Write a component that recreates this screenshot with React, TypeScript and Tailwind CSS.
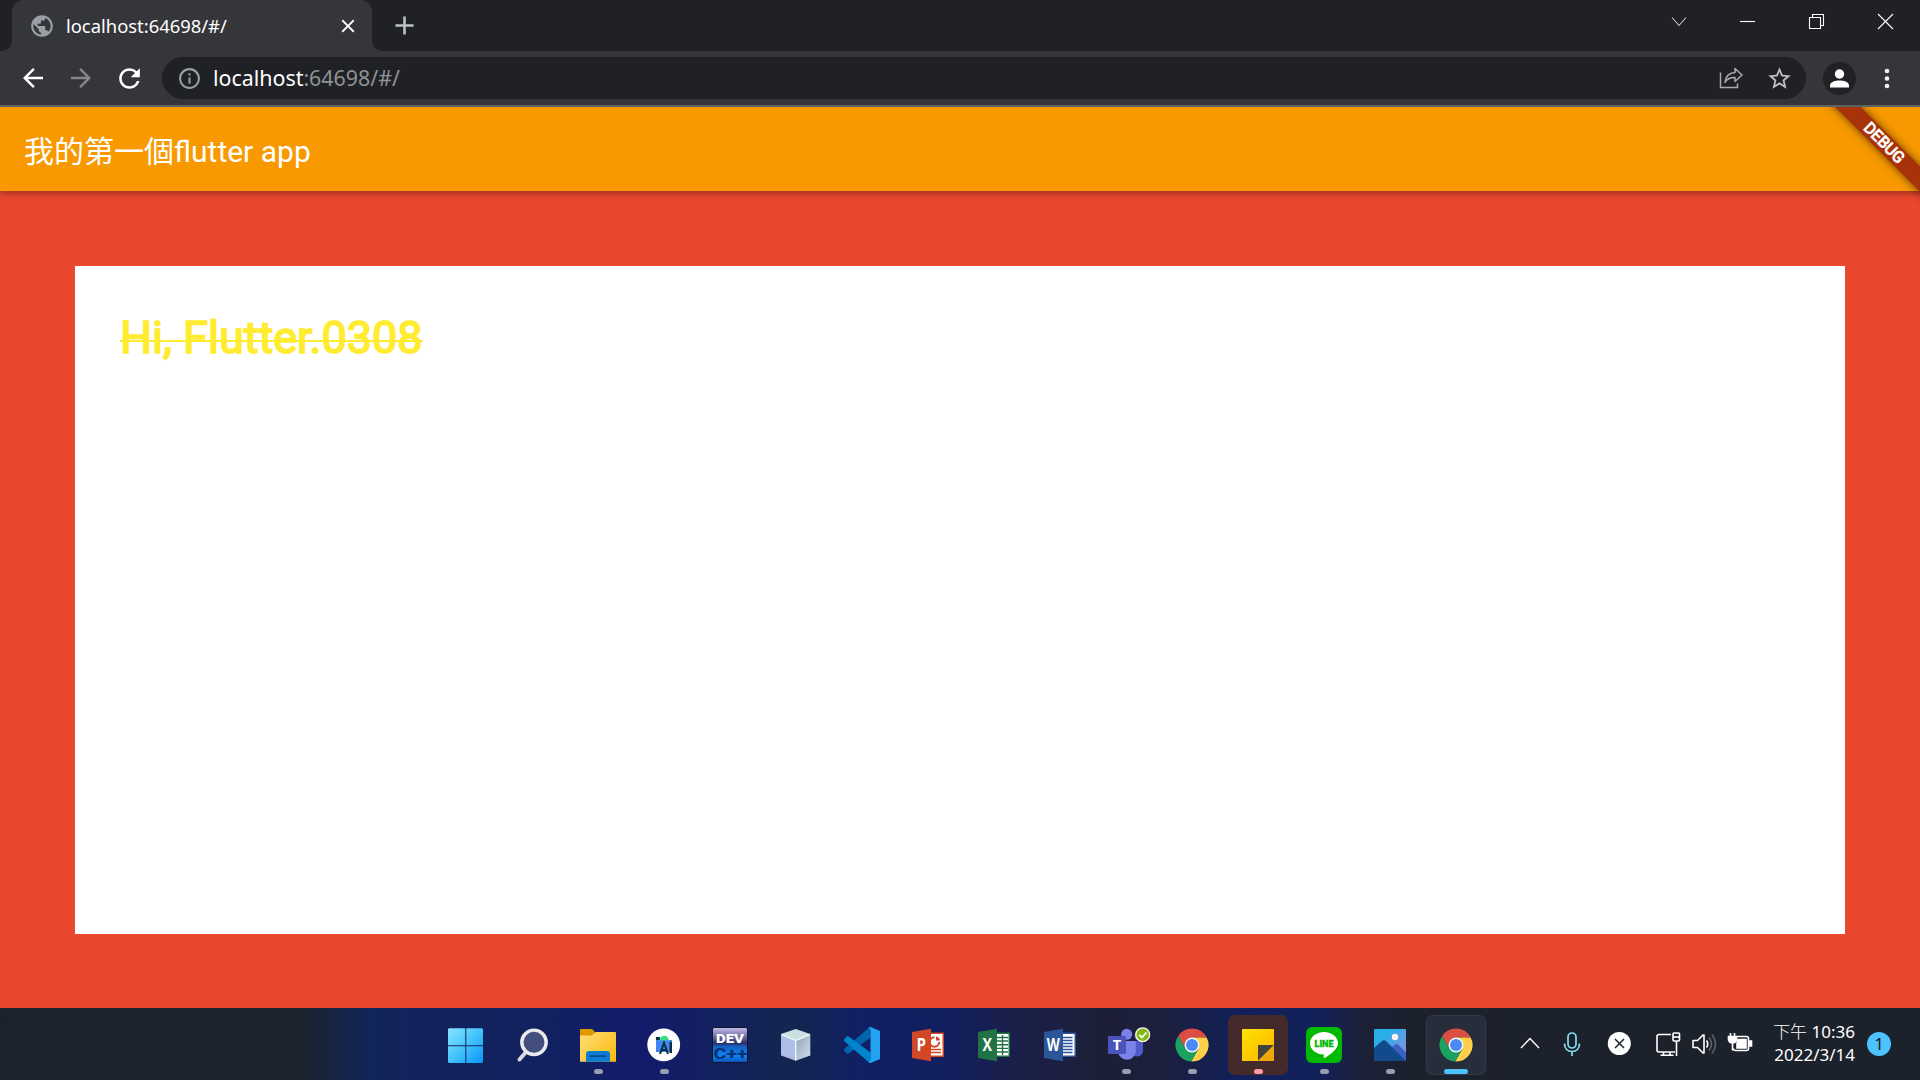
import type { ReactNode } from "react";
import { MdAdd, MdArrowBack, MdArrowForward, MdClose, MdInfoOutline, MdPublic, MdRefresh, MdStarBorder } from "react-icons/md";

const uiFont = "font-['Noto_Sans','Noto_Sans_CJK_TC',sans-serif]";

function TabStrip() {
  return (
    <div className="flex h-[51px] items-end bg-[#202124]">
      <div className="flex h-full w-3 items-end bg-[#35363a]">
        <div className="h-full w-3 rounded-br-[10px] bg-[#202124]" />
      </div>
      <div className="h-full w-[360px] bg-[#202124]">
        <div className="flex h-full items-center rounded-t-[12px] bg-[#35363a] pl-[17px] pr-[13px]">
          <MdPublic size={26} className="shrink-0 text-[#9aa0a6]" />
          <span className="ml-[11px] whitespace-nowrap text-[18.4px] leading-6 text-white">localhost:64698/#/</span>
          <MdClose size={22} className="ml-auto shrink-0 text-white" />
        </div>
      </div>
      <div className="h-full w-3 bg-[#35363a]">
        <div className="h-full w-3 rounded-bl-[10px] bg-[#202124]" />
      </div>
      <div className="flex h-full items-center pl-[5px]">
        <MdAdd size={31} className="text-[#bdc1c6]" />
      </div>
      <svg className="ml-auto h-[51px] w-[270px]" viewBox="1650 0 270 51" fill="none" stroke="#fff" strokeWidth="1.1">
        <path d="M1672 17.5l7 8 7-8" stroke="#c8c8c8" />
        <path d="M1740 21.5h15" />
        <path d="M1809.5 17.5h11v11h-11zM1812.500 17.500v-3h11v11h-3" />
        <path d="M1878 14l15 15M1893 14l-15 15" />
      </svg>
    </div>
  );
}

function Toolbar() {
  return (
    <div className="flex h-[56px] items-start border-b-2 border-[#606165] bg-[#35363a] pt-[6px]">
      <div className="flex h-[42px] w-[162px] items-center gap-[18px] pl-[18px]">
        <MdArrowBack size={30} className="shrink-0 text-white" />
        <MdArrowForward size={30} className="shrink-0 text-[#84868a]" />
        <MdRefresh size={31} className="shrink-0 text-white" />
      </div>
      <div className="flex h-[42px] w-[1644px] items-center rounded-full bg-[#202124] pl-[15px] pr-[13px]">
        <MdInfoOutline size={25} className="text-[#9aa0a6]" />
        <span className="ml-[11px] whitespace-nowrap text-[21.4px] leading-7 text-[#8f9296]">
          <span className="text-white">localhost</span>:64698/#/
        </span>
        <svg className="ml-auto mr-[23px] h-6 w-6" viewBox="0 0 24 24" fill="none" stroke="#a9abae" strokeWidth="1.5">
          <path d="M1.500 6.500v15h17v-4" />
          <path d="M16 2.500l7 6.500-7 6.500v-4c-5-.2-8 1.300-10 5 .5-6 4-9.500 10-10z" strokeLinejoin="round" />
        </svg>
        <MdStarBorder size={27} className="text-[#bfc1c4]" />
      </div>
      <svg className="ml-[17px] h-[42px] w-[33px]" viewBox="0 0 33 42">
        <circle cx="16.500" cy="21.500" r="16.500" fill="#202124" />
        <circle cx="16.500" cy="17" r="4.700" fill="#fff" />
        <path d="M7 30.500v-2c0-4 6-5 9.500-5s9.500 1 9.500 5v2z" fill="#fff" />
      </svg>
      <svg className="ml-[27px] h-[42px] w-2" viewBox="0 0 8 42" fill="#f1f3f4">
        <circle cx="4" cy="14" r="2.300" />
        <circle cx="4" cy="21.500" r="2.300" />
        <circle cx="4" cy="29" r="2.300" />
      </svg>
    </div>
  );
}

function FlutterPage() {
  return (
    <main className="relative flex h-[901px] flex-col overflow-hidden bg-[#e9472e] font-[Roboto,'Noto_Sans_CJK_TC',sans-serif]">
      <header className="z-10 flex h-[84px] shrink-0 items-center bg-[#f99900] pl-6 pt-[6px] text-[30px] text-white shadow-[0_3px_6px_rgba(0,0,0,0.28)]">
        <h1 className="whitespace-nowrap leading-9">我的第一個flutter app</h1>
      </header>
      <section className="mx-[75px] mt-[75px] h-[668px] bg-white pl-[45px] pt-[45px]">
        <p className="relative w-fit text-[45px] leading-[53px] text-[#ffeb2f] [-webkit-text-stroke:1.7px_#ffeb2f]">
          Hi, Flutter.0308
          <span className="absolute inset-x-0 top-[29px] h-[2px] bg-[#ffeb2f]" />
        </p>
      </section>
      <div className="absolute right-[-84px] top-[27px] z-20 flex h-[18px] w-[240px] rotate-45 items-center justify-center bg-[#a93308] text-[15.8px] text-white shadow-[0_0_10px_rgba(0,0,0,0.6)] [-webkit-text-stroke:0.9px_#fff]">
        DEBUG
      </div>
    </main>
  );
}

function ChromeLogo() {
  return (
    <>
      <path d="M16.150 21.020A16.500 16.500 0 0 1 44.700 22.500H30L23.500 33.750z" fill="#db4e43" />
      <path d="M44.700 22.500A16.500 16.500 0 0 1 29.150 46.480L36.500 33.750 30 22.500z" fill="#fecf48" />
      <path d="M29.150 46.480A16.500 16.500 0 0 1 16.150 21.020L23.500 33.750H36.500z" fill="#1ba261" />
      <circle cx="30" cy="30" r="7.500" fill="#f3f6fb" />
      <circle cx="30" cy="30" r="6" fill="#4a8af4" />
    </>
  );
}

function OfficeLogo({ letter, color, children }: { letter: string; color: string; children: ReactNode }) {
  return (
    <>
      <rect x="30" y="17.500" width="16" height="24.500" rx="1" fill={color} />
      <path d="M32 19h12.500v21.500H32z" fill="#fff" />
      {children}
      <path d="M14 17l19-3.300v32.600L14 43z" fill={color} />
      <text x="23.300" y="36" fontSize="17" fontWeight="700" textAnchor="middle" fill="#fff" fontFamily="Open Sans, sans-serif" textLength={letter === "W" ? 13 : 9.5} lengthAdjust="spacingAndGlyphs">
        {letter}
      </text>
    </>
  );
}

type App = { name: string; icon: ReactNode; dot?: "idle" | "alert" | "active" };

const apps: App[] = [
  {
    name: "Start",
    icon: (
      <>
        <defs>
          <linearGradient id="win" x1="12" y1="13" x2="47" y2="48" gradientUnits="userSpaceOnUse">
            <stop stopColor="#8be3ff" />
            <stop offset=".5" stopColor="#43c5fa" />
            <stop offset="1" stopColor="#0b93f8" />
          </linearGradient>
        </defs>
        <path d="M13 13.300h16.300v17H12v-16zM30.300 13.300H46l1 1v16H30.300zM12 31.300h17.300V48H13l-1-1zM30.300 31.300H47V47l-1 1H30.300z" fill="url(#win)" />
      </>
    ),
  },
  {
    name: "Search",
    icon: (
      <>
        <path d="M24 37l-6.500 7.500" stroke="#d5d7dc" strokeWidth="4" strokeLinecap="round" />
        <circle cx="32" cy="27.300" r="12.200" fill="#434e7d" stroke="#e9eaec" strokeWidth="3.400" />
      </>
    ),
  },
  {
    name: "File Explorer",
    dot: "idle",
    icon: (
      <>
        <defs>
          <linearGradient id="folder" x1="12" y1="17" x2="48" y2="47" gradientUnits="userSpaceOnUse">
            <stop stopColor="#ffdf78" />
            <stop offset="1" stopColor="#fbb90d" />
          </linearGradient>
        </defs>
        <path d="M12 15q0-1 1-1h11l4 4v6H12z" fill="#e09a00" />
        <path d="M12 20.500h12l4-3.500h19q1 0 1 1v28.700H12z" fill="url(#folder)" />
        <path d="M18 46.700V39q0-3 3-3h18q3 0 3 3v7.700z" fill="#0c7cd0" />
        <path d="M22.500 41.200h15" stroke="#084a94" strokeWidth="1.700" strokeLinecap="round" />
      </>
    ),
  },
  {
    name: "Android Studio",
    dot: "idle",
    icon: (
      <>
        <circle cx="29.700" cy="29.800" r="16.400" fill="#fff" />
        <path d="M22 25h16v12H22z" fill="#4285f4" />
        <path d="M22 22h4v3h-4zM35.500 27h2.500v11h-2.500z" fill="#0b3042" />
        <path d="M25.500 25.500a4.700 4.700 0 0 1 9.400 0z" fill="#3ddc84" />
        <path d="M26 39l4-11 4 11M26.500 35h7" stroke="#073042" strokeWidth="2" fill="none" />
      </>
    ),
  },
  {
    name: "Dev-C++",
    icon: (
      <>
        <defs>
          <linearGradient id="dev" x2="0" y2="1">
            <stop stopColor="#c3bdea" />
            <stop offset=".2" stopColor="#8580b8" />
            <stop offset=".45" stopColor="#2b2f6a" />
            <stop offset=".55" stopColor="#1263c4" />
            <stop offset=".8" stopColor="#1284f5" />
            <stop offset="1" stopColor="#0a52b8" />
          </linearGradient>
        </defs>
        <rect x="12.500" y="12.500" width="35" height="35" rx="2" fill="url(#dev)" stroke="#10152a" />
        <text x="30" y="28" fontSize="13.500" fontWeight="900" textAnchor="middle" fill="#fff" fontFamily="Roboto, sans-serif" textLength="28" lengthAdjust="spacingAndGlyphs">
          DEV
        </text>
        <text x="30.500" y="44.300" fontSize="14" fontWeight="900" textAnchor="middle" fill="#073477" fontFamily="Roboto, sans-serif" textLength="34" lengthAdjust="spacingAndGlyphs">
          C++
        </text>
      </>
    ),
  },
  {
    name: "NetBeans",
    icon: (
      <>
        <defs>
          <linearGradient id="cube" x1="0" y1="0" x2="1" y2="1">
            <stop stopColor="#8fa4bd" />
            <stop offset="1" stopColor="#d5deeb" />
          </linearGradient>
        </defs>
        <path d="M29.700 14l14.500 5-14.500 6.500L15 19z" fill="#c9e0de" />
        <path d="M15 19l14.700 6.500v20.200L15 40.500z" fill="#aebde6" />
        <path d="M44.300 19l-14.600 6.500v20.200l14.600-5.200z" fill="url(#cube)" />
        <path d="M15.500 19.300l14.200 6.200 14-6.200M29.700 25.500v20" stroke="#f4fbff" strokeWidth="1.300" fill="none" />
      </>
    ),
  },
  {
    name: "Visual Studio Code",
    icon: (
      <>
        <path d="M38.500 12v10.500L17 38.300q-1.500 1-2.800-.2L12.500 36q-1-1.300.2-2.500L36.500 13z" fill="#0065a9" />
        <path d="M38.500 48V37.500L17 21.700q-1.500-1-2.800.2L12.500 24q-1 1.300.2 2.500L36.500 47z" fill="#0084cc" />
        <path d="M38.500 12L48 16v28l-9.500 4q-2 .2-2.500-1.500 2 .7 2.500-1.500V15q-.5-2.200-2.500-1.500.5-1.700 2.500-1.500z" fill="#22a2f0" />
      </>
    ),
  },
  {
    name: "PowerPoint",
    icon: (
      <OfficeLogo letter="P" color="#d24726">
        <circle cx="36.500" cy="27" r="4.700" fill="none" stroke="#d24726" strokeWidth="2" />
        <path d="M36.500 20.500v6.500h6.500v-6.500z" fill="#fff" />
        <path d="M38 21.500v4h4q-.3-3.300-4-4z" fill="#d24726" />
        <path d="M33 34.500h10M33 37.500h10" stroke="#d24726" strokeWidth="1.500" />
      </OfficeLogo>
    ),
  },
  {
    name: "Excel",
    icon: (
      <OfficeLogo letter="X" color="#217346">
        <path d="M33 22.500h11M33 26h11M33 29.700h11M33 33.400h11M33 37h11M38.500 20v20" stroke="#217346" strokeWidth="1.400" />
      </OfficeLogo>
    ),
  },
  {
    name: "Word",
    icon: (
      <OfficeLogo letter="W" color="#2b579a">
        <path d="M33 22.500h9.500M33 25.500h9.500M33 28.500h9.500M33 31.500h9.500M33 34.500h9.500M33 37.500h9.500" stroke="#2b579a" strokeWidth="1.300" />
      </OfficeLogo>
    ),
  },
  {
    name: "Teams",
    dot: "idle",
    icon: (
      <>
        <circle cx="43" cy="21" r="4.500" fill="#5059c9" />
        <path d="M37 26h9q1 0 1 1v8.500a5.700 5.700 0 0 1-10 4z" fill="#5059c9" />
        <circle cx="30.700" cy="19.300" r="5.500" fill="#7b83eb" />
        <path d="M22 26h16.500q1.300 0 1.300 1.300V37a9 9 0 0 1-17.800 0z" fill="#7b83eb" />
        <rect x="12" y="21" width="18" height="18" rx="1.200" fill="#4b53bc" />
        <text x="21" y="34.800" fontSize="14.500" fontWeight="700" textAnchor="middle" fill="#fff" fontFamily="Open Sans, sans-serif">
          T
        </text>
        <circle cx="46.700" cy="19.700" r="6.900" fill="#84b816" stroke="#f4f7ea" strokeWidth="1.300" />
        <path d="M43.200 19.800l2.700 2.700 4.600-5" stroke="#fff" strokeWidth="1.800" fill="none" />
      </>
    ),
  },
  { name: "Chrome", dot: "idle", icon: <ChromeLogo /> },
  {
    name: "Sticky Notes",
    dot: "alert",
    icon: (
      <>
        <defs>
          <linearGradient id="note" x2="1" y2="1">
            <stop stopColor="#ffe100" />
            <stop offset="1" stopColor="#fbb400" />
          </linearGradient>
        </defs>
        <rect x="14" y="14" width="32" height="32" rx="1" fill="url(#note)" />
        <path d="M30 46V30h16z" fill="#44423f" />
        <path d="M30 46l16-16v16z" fill="#eda60c" />
      </>
    ),
  },
  {
    name: "LINE",
    dot: "idle",
    icon: (
      <>
        <rect x="12" y="12" width="36" height="36" rx="6" fill="#00b900" />
        <path d="M30 17c8 0 14 5 14 11.300 0 5.700-7.500 11.500-13.500 14.700-.8.300-1-.2-.8-1l.2-2.400C22 39.600 16 34.500 16 28.300 16 22 22 17 30 17z" fill="#fff" />
        <text x="30" y="31.800" fontSize="9" fontWeight="900" textAnchor="middle" fill="#00b900" stroke="#00b900" strokeWidth=".3" fontFamily="Roboto, sans-serif" textLength="19" lengthAdjust="spacingAndGlyphs">
          LINE
        </text>
      </>
    ),
  },
  {
    name: "Photos",
    dot: "idle",
    icon: (
      <>
        <defs>
          <linearGradient id="sky" x2="1" y2="1">
            <stop offset=".3" stopColor="#2aaee9" />
            <stop offset=".8" stopColor="#7d93dd" />
          </linearGradient>
        </defs>
        <rect x="14" y="14" width="32" height="32" rx="1" fill="url(#sky)" />
        <path d="M29 35l6-5.500q1.500-1 3 0l8 8V46H29z" fill="#3a62c4" />
        <path d="M14 33l8-7q2-1.500 4 0l20 20H14z" fill="#124a8c" />
        <circle cx="35" cy="22" r="3.200" fill="#fbf3ef" />
      </>
    ),
  },
  { name: "Chrome window", dot: "active", icon: <ChromeLogo /> },
];

function TaskbarButton({ app }: { app: App }) {
  const tone =
    app.dot === "alert" ? "bg-[#452a2b]" : app.dot === "active" ? "bg-[#282d3b] ring-1 ring-inset ring-[#343947]" : "";
  return (
    <div className={`h-[60px] w-[60px] rounded-[7px] ${tone}`}>
      <svg className="h-[60px] w-[60px]" viewBox="0 0 60 60" fill="none" aria-label={app.name}>
        {app.icon}
        {app.dot === "idle" && <rect x="26" y="54" width="9" height="5" rx="2.500" fill="#989db0" />}
        {app.dot === "alert" && <rect x="26" y="54" width="9" height="5" rx="2.500" fill="#ff99a4" />}
        {app.dot === "active" && <rect x="18" y="54" width="24" height="5" rx="2.500" fill="#4cc2ff" />}
      </svg>
    </div>
  );
}

function Tray() {
  return (
    <div className="ml-auto flex h-full items-start">
      <svg className="h-[72px] w-[245px]" viewBox="1515 1008 245 72" fill="none" stroke="#fff" strokeWidth="1.600">
        <path d="M1521 1048l9-9.500 9 9.500" strokeWidth="1.400" />
        <g stroke="#86dcf0" strokeWidth="1.700">
          <rect x="1568" y="1033" width="8" height="15" rx="4" />
          <path d="M1564.500 1043.500c0 5 3 8 7.500 8s7.500-3 7.500-8M1572 1051.500v4.500" />
        </g>
        <circle cx="1619.300" cy="1043.500" r="11.500" fill="#fff" stroke="none" />
        <path d="M1615 1039l9 9M1624 1039l-9 9" stroke="#1d232d" strokeWidth="1.500" />
        <path d="M1671 1034.500h-12q-2 0-2 2V1050q0 2 2 2h16M1663.500 1052v3.500M1670 1052v3.500M1660.500 1055.200h13M1676.500 1041v15" />
        <rect x="1673" y="1033" width="6.500" height="8" rx="1" />
        <path d="M1673 1037h6.500" />
        <path d="M1693 1040.500h4.500l5.500-5.500h1v18h-1l-5.500-5.500h-4.500z" strokeLinejoin="round" />
        <path d="M1706.500 1040.500q2.500 3.500 0 7" />
        <path d="M1709 1037.500q5 6.500 0 13M1712 1034.500q7 9.500 0 19" stroke="#5d626b" />
        <path d="M1737 1036.500h9.500q2 0 2 2v10q0 2-2 2h-11q-2 0-2-2" />
        <path d="M1738 1039.500h8v8.500h-9v-5z" fill="#fff" />
        <path d="M1749 1041h2.500v5h-2.500zM1728.500 1036.500h8v3.500q-1 3-4 3t-4-3zM1730.500 1033v4M1734.500 1033v4" fill="#fff" />
        <path d="M1732.500 1043v7.500" />
      </svg>
      <div className="mt-3 flex w-[95px] flex-col items-end text-[17px] leading-[23px] text-white">
        <span className="whitespace-nowrap">
          <span className="font-light">下午</span> 10:36
        </span>
        <span className="whitespace-nowrap">2022/3/14</span>
      </div>
      <div className="ml-3 mr-[29px] mt-6 flex h-6 w-6 items-center justify-center rounded-full bg-[#4cc2ff] text-[17px] leading-6 text-[#111820]">1</div>
    </div>
  );
}

function Taskbar() {
  return (
    <footer className="flex h-[72px] bg-[linear-gradient(90deg,#1c222b_0px,#1c232c_300px,#12255a_370px,#112060_560px,#131b6c_640px,#13205f_710px,#13264f_790px,#111f64_860px,#111f60_940px,#191f4a_1010px,#1d1f38_1100px,#1c1f3c_1160px,#11205a_1240px,#12215a_1320px,#1c2036_1365px,#1c212c_1420px,#1c222c_1920px)]">
      <nav className="ml-[436px] mt-[7px] flex gap-[6px]">
        {apps.map((app) => (
          <TaskbarButton key={app.name} app={app} />
        ))}
      </nav>
      <Tray />
    </footer>
  );
}

export default function App() {
  return (
    <div className={`flex h-[1080px] w-[1920px] flex-col overflow-hidden ${uiFont}`}>
      <TabStrip />
      <Toolbar />
      <FlutterPage />
      <Taskbar />
    </div>
  );
}
